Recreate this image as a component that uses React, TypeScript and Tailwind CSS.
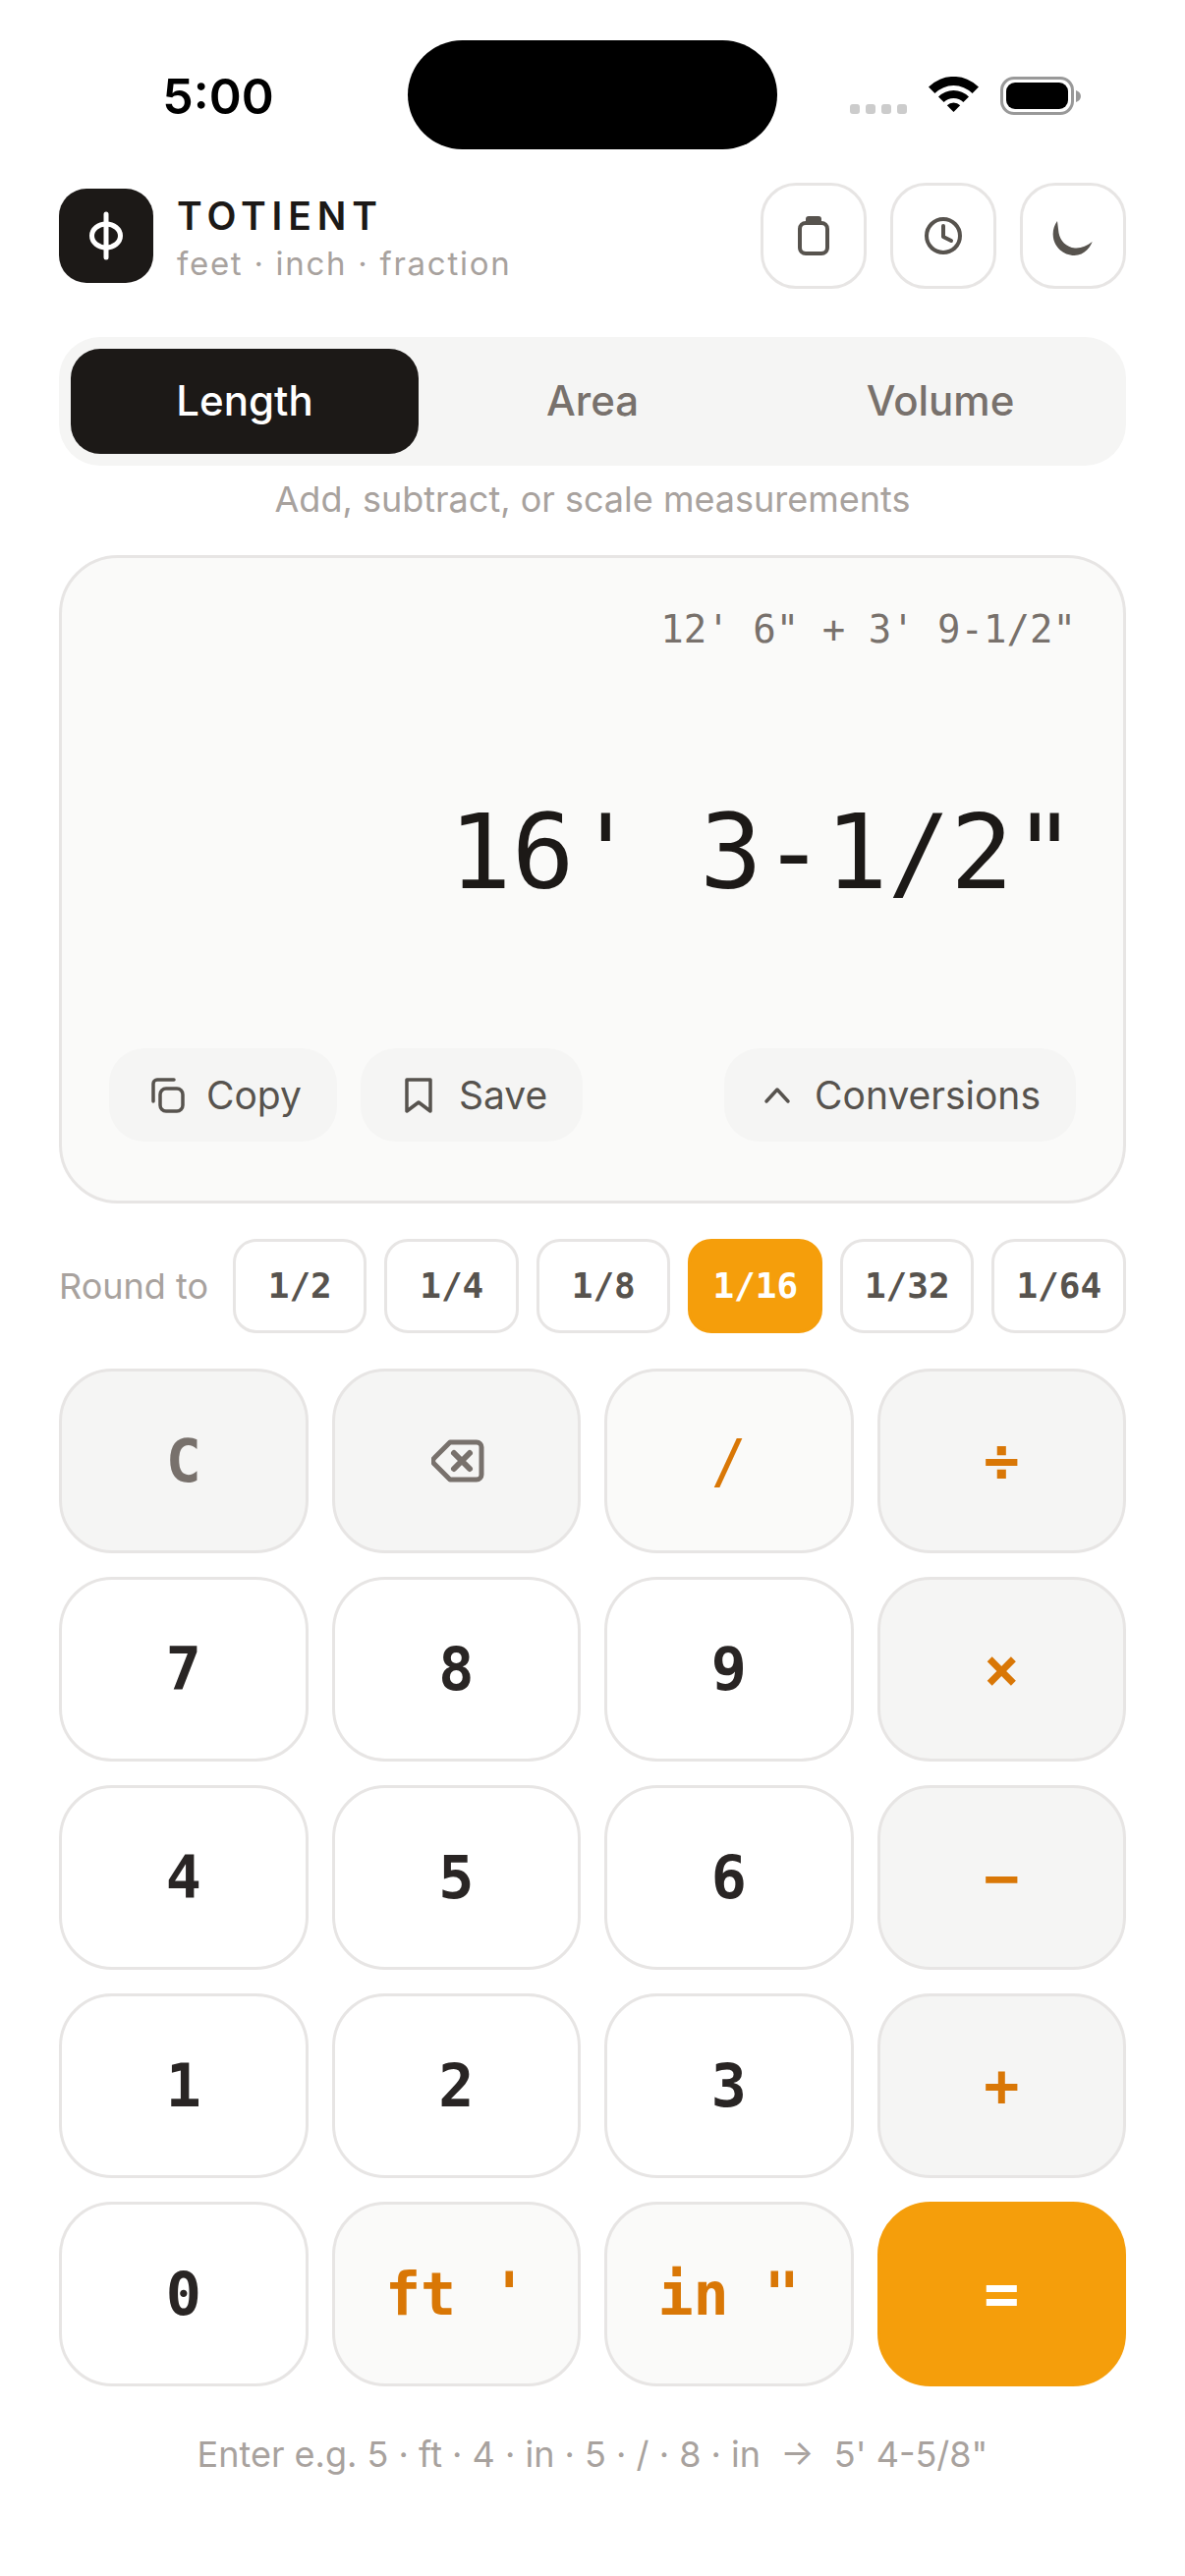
const sans = "font-['Inter',sans-serif]";
const mono = "font-['DejaVu_Sans_Mono',monospace]";

function StatusBar() {
  return (
    <div className="grid grid-cols-[415px_376px_415px] pt-[41px]">
      <div className={`flex items-center justify-center pl-[29px] pt-[3px] text-[50px] font-semibold text-black ${sans}`}>5:00</div>
      <div className="h-[111px] rounded-full bg-black" />
      <div className="flex items-start pl-[74px] pt-[37px]">
        <div className="mt-[28px] flex gap-[6px]">
          <span className="h-[10px] w-[10px] rounded-[3px] bg-[#cccccc]" />
          <span className="h-[10px] w-[10px] rounded-[3px] bg-[#cccccc]" />
          <span className="h-[10px] w-[10px] rounded-[3px] bg-[#cccccc]" />
          <span className="h-[10px] w-[10px] rounded-[3px] bg-[#cccccc]" />
        </div>
        <svg className="ml-[22px]" width="51" height="37" viewBox="0 0 51 37" fill="#000">
          <path d="M0 10.5A36 36 0 0 1 51 10.5L44.6 17A27 27 0 0 0 6.4 17Z" />
          <path d="M10 20.4A22 22 0 0 1 41 20.4L35.4 26A14 14 0 0 0 15.6 26Z" />
          <path d="M18.8 29.3A9.5 9.5 0 0 1 32.2 29.3L25.5 36Z" />
        </svg>
        <div className="ml-[22px] h-[39px] w-[75px] rounded-[14px] border-[3px] border-[#999999] p-[3px]">
          <div className="h-full w-full rounded-[9px] bg-black" />
        </div>
        <svg className="ml-[2px] mt-[14px]" width="5" height="12" viewBox="0 0 5 12" fill="#999999">
          <path d="M0 0C3 1 5 3 5 6S3 11 0 12Z" />
        </svg>
      </div>
    </div>
  );
}

function IconButton({ children }: { children: React.ReactNode }) {
  return (
    <button className="flex h-[108px] w-[108px] items-center justify-center rounded-[36px] border-[3px] border-[#e7e5e4] bg-white">
      {children}
    </button>
  );
}

function Header() {
  return (
    <div className="mt-[34px] flex items-center justify-between">
      <div className="flex items-center gap-[24px]">
        <div className="flex h-[96px] w-[96px] items-center justify-center rounded-[28px] bg-[#1c1917]">
          <svg width="40" height="50" viewBox="0 0 40 50" fill="none" stroke="#fff" strokeWidth="5" strokeLinecap="round">
            <ellipse cx="20" cy="25" rx="14.5" ry="12" />
            <path d="M20 3V47" />
          </svg>
        </div>
        <div className={`pt-[6px] ${sans}`}>
          <div className="text-[39px] leading-[48px] font-semibold tracking-[0.15em] text-[#1c1917]">TOTIENT</div>
          <div className="mt-[2px] text-[33px] leading-[44px] tracking-[0.052em] text-[#a8a29e]">feet · inch · fraction</div>
        </div>
      </div>
      <div className="flex gap-[24px]">
        <IconButton>
          <svg width="54" height="54" viewBox="0 0 54 54" fill="none" stroke="#57534e" strokeWidth="4">
            <rect x="13" y="14" width="28" height="31" rx="6" />
            <path d="M22 7H32A3 3 0 0 1 35 10V14H19V10A3 3 0 0 1 22 7Z" fill="#57534e" stroke="none" />
          </svg>
        </IconButton>
        <IconButton>
          <svg width="54" height="54" viewBox="0 0 54 54" fill="none" stroke="#57534e" strokeWidth="4" strokeLinecap="round" strokeLinejoin="round">
            <circle cx="27" cy="27" r="17" />
            <path d="M27 17V28L35 32" />
          </svg>
        </IconButton>
        <IconButton>
          <svg width="54" height="54" viewBox="0 0 54 54" fill="#57534e">
            <path d="M11 12C8 16 6.5 21 6.7 26C7 38 17 47 28.5 47C36 47 43 42 46.7 33C41 37.5 35 40 29 39.5C20 38.5 14 32 12.5 24C12 20 11.5 16 11 12Z" />
          </svg>
        </IconButton>
      </div>
    </div>
  );
}

function Tabs() {
  return (
    <div className={`mt-[49px] grid h-[131px] grid-cols-3 rounded-[42px] bg-[#f5f5f4] p-[12px] text-[42px] font-medium ${sans}`}>
      <div className="flex items-center justify-center rounded-[30px] bg-[#1c1917] pb-[2px] text-white">Length</div>
      <div className="flex items-center justify-center pb-[2px] text-[#78716c]">Area</div>
      <div className="flex items-center justify-center pb-[2px] text-[#78716c]">Volume</div>
    </div>
  );
}

function ActionButton({ icon, label, className }: { icon: React.ReactNode; label: string; className?: string }) {
  return (
    <button className={`flex h-[95px] items-center rounded-[36px] bg-[#f5f5f4] text-[39px] text-[#57534e] ${sans} ${className ?? ""}`}>
      {icon}
      <span className="pt-[2px]">{label}</span>
    </button>
  );
}

function Display() {
  return (
    <div className="mt-[34px] flex h-[660px] flex-col rounded-[60px] border-[3px] border-[#e7e5e4] bg-[#fafaf9] px-[48px] pb-[60px] pt-[47px]">
      <div className={`text-right text-[39px] leading-[52px] text-[#78716c] ${mono}`}>12' 6" + 3' 9-1/2"</div>
      <div className={`mt-[135px] text-right text-[106px] leading-[132px] text-[#1c1917] ${mono}`}>16' 3-1/2"</div>
      <div className="mt-auto flex gap-[24px]">
        <ActionButton
          label="Copy"
          className="gap-[22px] pl-[43px] pr-[36px]"
          icon={
            <svg width="34" height="36" viewBox="0 0 34 36" fill="none" stroke="#57534e" strokeWidth="3.5" strokeLinecap="round">
              <rect x="9" y="11" width="23" height="23" rx="6" />
              <path d="M2 24V6A4 4 0 0 1 6 2H23" />
            </svg>
          }
        />
        <ActionButton
          label="Save"
          className="gap-[27px] pl-[45px] pr-[36px]"
          icon={
            <svg width="28" height="36" viewBox="0 0 28 36" fill="none" stroke="#57534e" strokeWidth="3.5" strokeLinejoin="round">
              <path d="M2 2H26V34L14 25L2 34Z" />
            </svg>
          }
        />
        <ActionButton
          label="Conversions"
          className="ml-auto gap-[24px] pl-[40px] pr-[36px]"
          icon={
            <svg width="28" height="18" viewBox="0 0 28 18" fill="none" stroke="#57534e" strokeWidth="3.5" strokeLinecap="round" strokeLinejoin="round">
              <path d="M3 15L14 3L25 15" />
            </svg>
          }
        />
      </div>
    </div>
  );
}

function RoundRow() {
  const options = ["1/2", "1/4", "1/8", "1/16", "1/32", "1/64"];
  return (
    <div className="mt-[36px] flex items-center gap-[25px]">
      <span className={`text-[36px] text-[#a8a29e] ${sans}`}>Round to</span>
      <div className="grid flex-1 grid-cols-6 gap-[18px]">
        {options.map((o) => (
          <button
            key={o}
            className={`flex h-[96px] items-center justify-center rounded-[24px] border-[3px] text-[36px] font-bold ${mono} ${
              o === "1/16" ? "border-[#f59e0b] bg-[#f59e0b] text-white" : "border-[#e7e5e4] bg-white text-[#57534e]"
            }`}
          >
            {o}
          </button>
        ))}
      </div>
    </div>
  );
}

type KeyKind = "num" | "fn" | "op" | "unit" | "slash" | "eq";

function Key({ kind, children }: { kind: KeyKind; children: React.ReactNode }) {
  const styles: Record<KeyKind, string> = {
    num: "bg-white border-[#e7e5e4] text-[#292524] font-bold",
    fn: "bg-[#f5f5f4] border-[#e7e5e4] text-[#78716c] font-bold",
    op: "bg-[#f5f5f4] border-[#e7e5e4] text-[#d97706] font-bold",
    unit: "bg-[#fafaf9] border-[#e7e5e4] text-[#d97706] font-bold",
    slash: "bg-[#fafaf9] border-[#e7e5e4] text-[#d97706]",
    eq: "bg-[#f59e0b] border-[#f59e0b] text-white font-bold",
  };
  return (
    <button className={`flex h-[188px] items-center justify-center rounded-[54px] border-[3px] text-[60px] ${mono} ${styles[kind]}`}>
      {children}
    </button>
  );
}

function Keypad() {
  return (
    <div className="mt-[36px] grid grid-cols-4 gap-x-[24px] gap-y-[24px]">
      <Key kind="fn">C</Key>
      <Key kind="fn">
        <svg className="ml-[3px]" width="54" height="44" viewBox="0 0 54 44" fill="none" stroke="#78716c" strokeWidth="5" strokeLinecap="round" strokeLinejoin="round">
          <path d="M19 3H46A5 5 0 0 1 51 8V36A5 5 0 0 1 46 41H19L3 25A4 4 0 0 1 3 19Z" />
          <path d="M23 14L39 30M39 14L23 30" strokeWidth="6" />
        </svg>
      </Key>
      <Key kind="slash">/</Key>
      <Key kind="op">÷</Key>
      <Key kind="num">7</Key>
      <Key kind="num">8</Key>
      <Key kind="num">9</Key>
      <Key kind="op">×</Key>
      <Key kind="num">4</Key>
      <Key kind="num">5</Key>
      <Key kind="num">6</Key>
      <Key kind="op">−</Key>
      <Key kind="num">1</Key>
      <Key kind="num">2</Key>
      <Key kind="num">3</Key>
      <Key kind="op">+</Key>
      <Key kind="num">0</Key>
      <Key kind="unit">ft '</Key>
      <Key kind="unit">in "</Key>
      <Key kind="eq">=</Key>
    </div>
  );
}

export default function App() {
  return (
    <div className="h-[2622px] w-[1206px] overflow-hidden bg-white">
      <StatusBar />
      <div className="px-[60px]">
        <Header />
        <Tabs />
        <p className={`mt-[11px] text-center text-[36px] leading-[46px] text-[#a8a29e] ${sans}`}>
          Add, subtract, or scale measurements
        </p>
        <Display />
        <RoundRow />
        <Keypad />
        <p className={`mt-[46px] text-center text-[36px] leading-[46px] text-[#a8a29e] ${sans}`}>
          Enter e.g. 5 · ft · 4 · in · 5 · / · 8 · in &nbsp;→&nbsp; 5' 4-5/8"
        </p>
      </div>
    </div>
  );
}
